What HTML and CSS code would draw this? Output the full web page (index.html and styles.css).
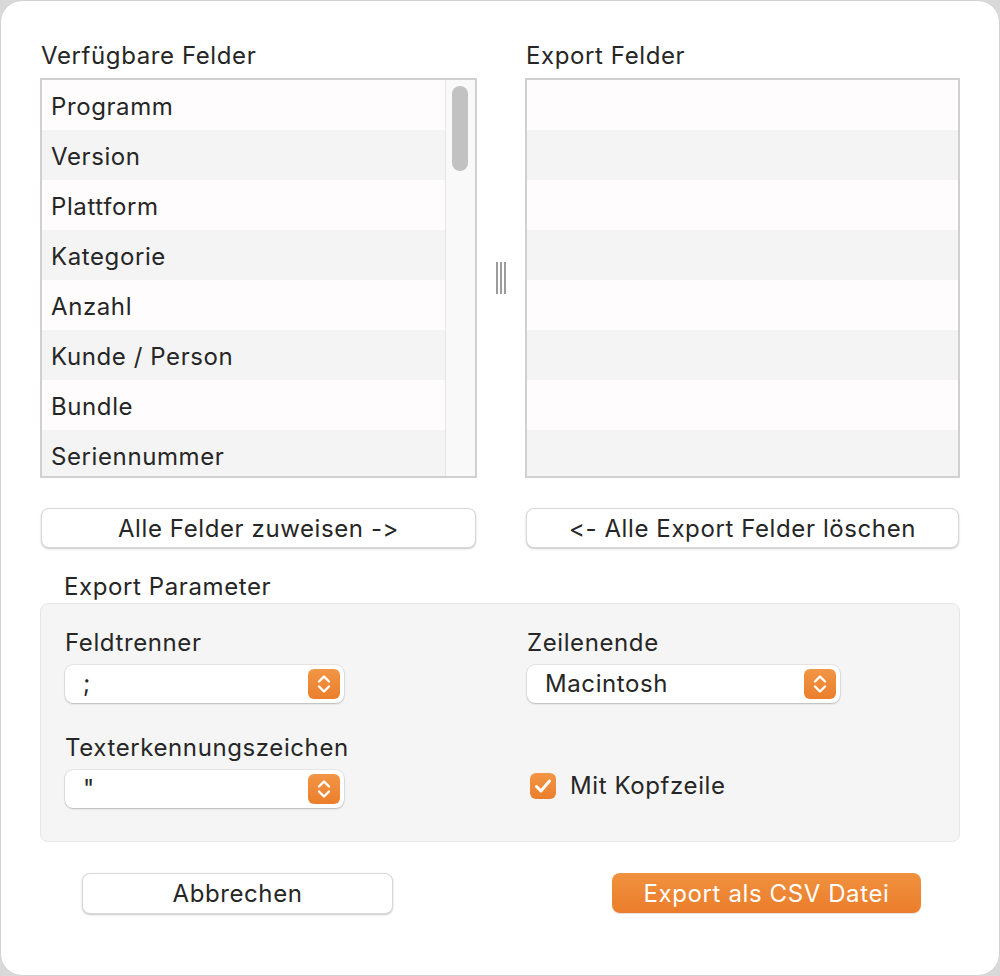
FILE: index.html
```html
<!DOCTYPE html>
<html lang="de">
<head>
<meta charset="utf-8">
<title>CSV Export</title>
<link rel="stylesheet" href="styles.css">
</head>
<body>
<div class="window">
  <div class="lists">
    <div class="col">
      <div class="label">Verfügbare Felder</div>
      <div class="listbox">
        <div class="rows">
          <div class="row">Programm</div>
          <div class="row">Version</div>
          <div class="row">Plattform</div>
          <div class="row">Kategorie</div>
          <div class="row">Anzahl</div>
          <div class="row">Kunde / Person</div>
          <div class="row">Bundle</div>
          <div class="row">Seriennummer</div>
        </div>
        <div class="scrollbar"><div class="thumb"></div></div>
      </div>
      <button class="btn wide">Alle Felder zuweisen -&gt;</button>
    </div>
    <div class="splitter"><span></span><span></span><span></span></div>
    <div class="col">
      <div class="label">Export Felder</div>
      <div class="listbox">
        <div class="rows">
          <div class="row"></div>
          <div class="row"></div>
          <div class="row"></div>
          <div class="row"></div>
          <div class="row"></div>
          <div class="row"></div>
          <div class="row"></div>
          <div class="row"></div>
        </div>
      </div>
      <button class="btn wide">&lt;- Alle Export Felder löschen</button>
    </div>
  </div>

  <div class="group-title">Export Parameter</div>
  <div class="group">
    <div class="field">
      <div class="flabel">Feldtrenner</div>
      <div class="popup short"><span class="pval">;</span><span class="stepper"><svg viewBox="0 0 32 30" width="32" height="30"><path d="M11 12.5 L16 7.5 L21 12.5" /><path d="M11 17.5 L16 22.5 L21 17.5" /></svg></span></div>
    </div>
    <div class="field">
      <div class="flabel">Zeilenende</div>
      <div class="popup long"><span class="pval">Macintosh</span><span class="stepper"><svg viewBox="0 0 32 30" width="32" height="30"><path d="M11 12.5 L16 7.5 L21 12.5" /><path d="M11 17.5 L16 22.5 L21 17.5" /></svg></span></div>
    </div>
    <div class="field">
      <div class="flabel">Texterkennungszeichen</div>
      <div class="popup short"><span class="pval">"</span><span class="stepper"><svg viewBox="0 0 32 30" width="32" height="30"><path d="M11 12.5 L16 7.5 L21 12.5" /><path d="M11 17.5 L16 22.5 L21 17.5" /></svg></span></div>
    </div>
    <div class="field check-field">
      <label class="check"><span class="box"><svg viewBox="0 0 26 26" width="26" height="26"><path d="M6.5 13.5 L11 18 L19.5 8" /></svg></span><span>Mit Kopfzeile</span></label>
    </div>
  </div>

  <div class="footer">
    <button class="btn cancel"><span class="cond">Abbrechen</span></button>
    <button class="btn primary"><span class="cond">Export als CSV Datei</span></button>
  </div>
</div>
</body>
</html>
```

FILE: styles.css
```css
html, body {
  margin: 0;
  padding: 0;
}
body {
  background: #d9d9d9;
  font-family: Inter, "Liberation Sans", sans-serif;
  font-feature-settings: "calt" 0, "liga" 0;
  font-variant-ligatures: none;
  color: #262626;
  font-size: 24px;
  letter-spacing: 0.6px;
}
.window {
  box-sizing: border-box;
  width: 1000px;
  height: 976px;
  background: #ffffff;
  border: 1px solid #d2d2d2;
  border-radius: 22px;
  padding: 42px 40px 0 39px;
}
.lists {
  display: grid;
  grid-template-columns: 437px 48px 435px;
}
.col {
  display: flex;
  flex-direction: column;
}
.label {
  height: 26px;
  line-height: 26px;
  padding-left: 1px;
  margin-bottom: 9px;
}
.listbox {
  box-sizing: border-box;
  height: 400px;
  border: 2px solid #d0d0d0;
  display: flex;
  overflow: hidden;
}
.rows {
  flex: 1;
}
.row {
  height: 46px;
  line-height: 46px;
  padding: 4px 0 0 9px;
  background: #fefcfd;
}
.row:nth-child(even) {
  background: #f4f4f5;
}
.scrollbar {
  width: 30px;
  background: #f9f9f9;
  border-left: 1px solid #e6e6e6;
  padding: 6px 0 0 6px;
  box-sizing: border-box;
}
.thumb {
  width: 16px;
  height: 85px;
  border-radius: 8px;
  background: #c2c2c2;
}
.splitter {
  display: flex;
  justify-content: center;
  gap: 2px;
  padding-top: 219px;
}
.splitter span {
  width: 2px;
  height: 32px;
  background: #9c9c9c;
}
.btn {
  font-family: inherit;
  font-feature-settings: "calt" 0, "liga" 0;
  letter-spacing: 0.6px;
  font-size: 24px;
  color: #262626;
  background: #ffffff;
  border: 0.5px solid #d8d8d8;
  border-radius: 8px;
  box-shadow: 0 1px 2px rgba(0,0,0,0.22);
  height: 40px;
  padding: 0;
}
.wide {
  margin: 30px 1px 0 1px;
}
.group-title {
  margin-top: 26px;
  padding-left: 24px;
  height: 26px;
  line-height: 26px;
  margin-bottom: 3px;
}
.group {
  box-sizing: border-box;
  width: 920px;
  height: 239px;
  background: #f5f5f5;
  border: 1px solid #e6e6e6;
  border-radius: 8px;
  padding: 26px 0 0 24px;
  display: grid;
  grid-template-columns: 462px 1fr;
  grid-template-rows: 105px 80px;
}
.flabel {
  height: 26px;
  line-height: 26px;
  margin-bottom: 9px;
}
.popup {
  box-sizing: border-box;
  height: 38px;
  background: #ffffff;
  border-radius: 8px;
  box-shadow: 0 0 0 0.5px rgba(0,0,0,0.12), 0 1px 2px rgba(0,0,0,0.2);
  display: flex;
  align-items: center;
  justify-content: space-between;
  padding: 0 4px 0 18px;
}
.popup.short { width: 279px; }
.popup.long { width: 313px; }
.pval {
  line-height: 38px;
}
.stepper {
  width: 32px;
  height: 30px;
  border-radius: 6px;
  background: linear-gradient(#f29645, #eb7e2c);
  display: block;
}
.stepper svg, .box svg {
  display: block;
}
.stepper path {
  fill: none;
  stroke: #ffffff;
  stroke-width: 2.4;
  stroke-linecap: round;
  stroke-linejoin: round;
}
.check-field {
  padding-top: 36px;
}
.check {
  display: flex;
  align-items: center;
  gap: 14px;
  margin-left: 3px;
}
.box {
  width: 26px;
  height: 26px;
  border-radius: 6px;
  background: linear-gradient(#f29645, #eb7e2c);
}
.box path {
  fill: none;
  stroke: #ffffff;
  stroke-width: 3;
  stroke-linecap: round;
  stroke-linejoin: round;
}
.footer {
  display: flex;
  justify-content: space-between;
  padding: 31px 38px 0 42px;
}
.cancel {
  width: 311px;
  height: 41px;
}
.primary {
  width: 309px;
  height: 40px;
  background: linear-gradient(#f0913f, #eb7d2b);
  color: #ffffff;
  border: none;
  box-shadow: 0 1px 1px rgba(0,0,0,0.12);
}
.cond {
  display: inline-block;
}
```
